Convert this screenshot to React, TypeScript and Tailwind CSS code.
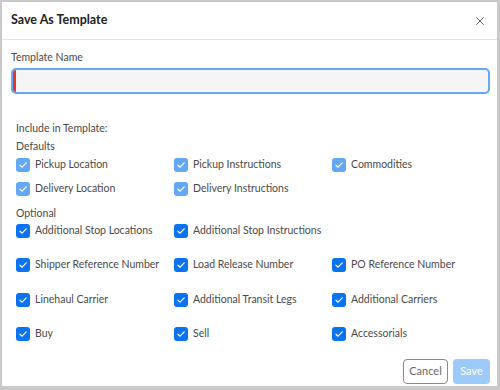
import { X } from "lucide-react";

const defaults = [
  ["Pickup Location", "Pickup Instructions", "Commodities"],
  ["Delivery Location", "Delivery Instructions", ""],
];

const optional = [
  ["Additional Stop Locations", "Additional Stop Instructions", ""],
  ["Shipper Reference Number", "Load Release Number", "PO Reference Number"],
  ["Linehaul Carrier", "Additional Transit Legs", "Additional Carriers"],
  ["Buy", "Sell", "Accessorials"],
];

function Check({ label, muted }: { label: string; muted?: boolean }) {
  if (!label) return <div />;
  return (
    <div className="flex items-center gap-[5px] whitespace-nowrap">
      <span
        className={`w-[14px] h-[14px] shrink-0 rounded-[3px] flex items-center justify-center ${
          muted ? "bg-[#62a8f7]" : "bg-[#0b72f0]"
        }`}
      >
        <svg width="10" height="10" viewBox="0 0 10 10" fill="none">
          <path d="M2 5.2 L4.1 7.2 L8.2 2.8" stroke="white" strokeWidth="1.2" strokeLinecap="round" strokeLinejoin="round" />
        </svg>
      </span>
      <span className="text-[10.5px] text-[#4a4a4a]">{label}</span>
    </div>
  );
}

export default function App() {
  return (
    <div className="w-[500px] h-[390px] bg-[#c9c9c9] pt-[2px] pl-[2px] pr-[3px] pb-[4px] font-['Lato',sans-serif]">
      <div className="h-full bg-white flex flex-col">
        {/* Header */}
        <div className="h-[38px] shrink-0 flex items-center justify-between pl-[9px] pr-[10px] border-b border-[#e6e6e6]">
          <h1 className="text-[12.5px] font-bold text-[#222]">Save As Template</h1>
          <X className="w-[14px] h-[14px] text-[#555]" strokeWidth={1.5} />
        </div>

        {/* Body */}
        <div className="flex-1 pl-[9px] pr-[7px] pt-[10px]">
          <p className="text-[10.5px] text-[#4a4a4a] leading-[15px]">Template Name</p>
          <div className="mt-[3px] h-[26px] rounded-[5px] border-2 border-[#64a8f8] bg-[#f5f5f5] flex">
            <span className="w-[3px] rounded-l-[3px] bg-[#e0362c]" />
          </div>

          <div className="pl-[5px] pt-[26px]">
            <p className="text-[10.5px] text-[#4a4a4a] leading-[16px]">Include in Template:</p>
            <p className="text-[10.5px] text-[#4a4a4a] leading-[16px] mt-[2px]">Defaults</p>
            <div className="grid grid-cols-[158px_158px_1fr] -mt-[1px]">
              {defaults.flat().map((l, i) => (
                <div key={i} className="h-[24px] flex items-center">
                  <Check label={l} muted />
                </div>
              ))}
            </div>
            <p className="text-[10.5px] text-[#4a4a4a] leading-[16px] mt-[4px]">Optional</p>
            <div className="grid grid-cols-[158px_158px_1fr]">
              {optional.flat().map((l, i) => (
                <div key={i} className="h-[34.4px] flex items-start pt-[2px]">
                  <Check label={l} />
                </div>
              ))}
            </div>
          </div>
        </div>

        {/* Footer */}
        <div className="flex justify-end gap-[5px] pr-[7px] pb-[5px]">
          <button className="h-[25px] w-[45px] rounded-[4px] border border-[#8a8a8a] text-[11px] text-[#666] bg-white">
            Cancel
          </button>
          <button className="h-[25px] w-[37px] rounded-[4px] bg-[#9ccbfb] text-[11px] text-white">
            Save
          </button>
        </div>
      </div>
    </div>
  );
}
